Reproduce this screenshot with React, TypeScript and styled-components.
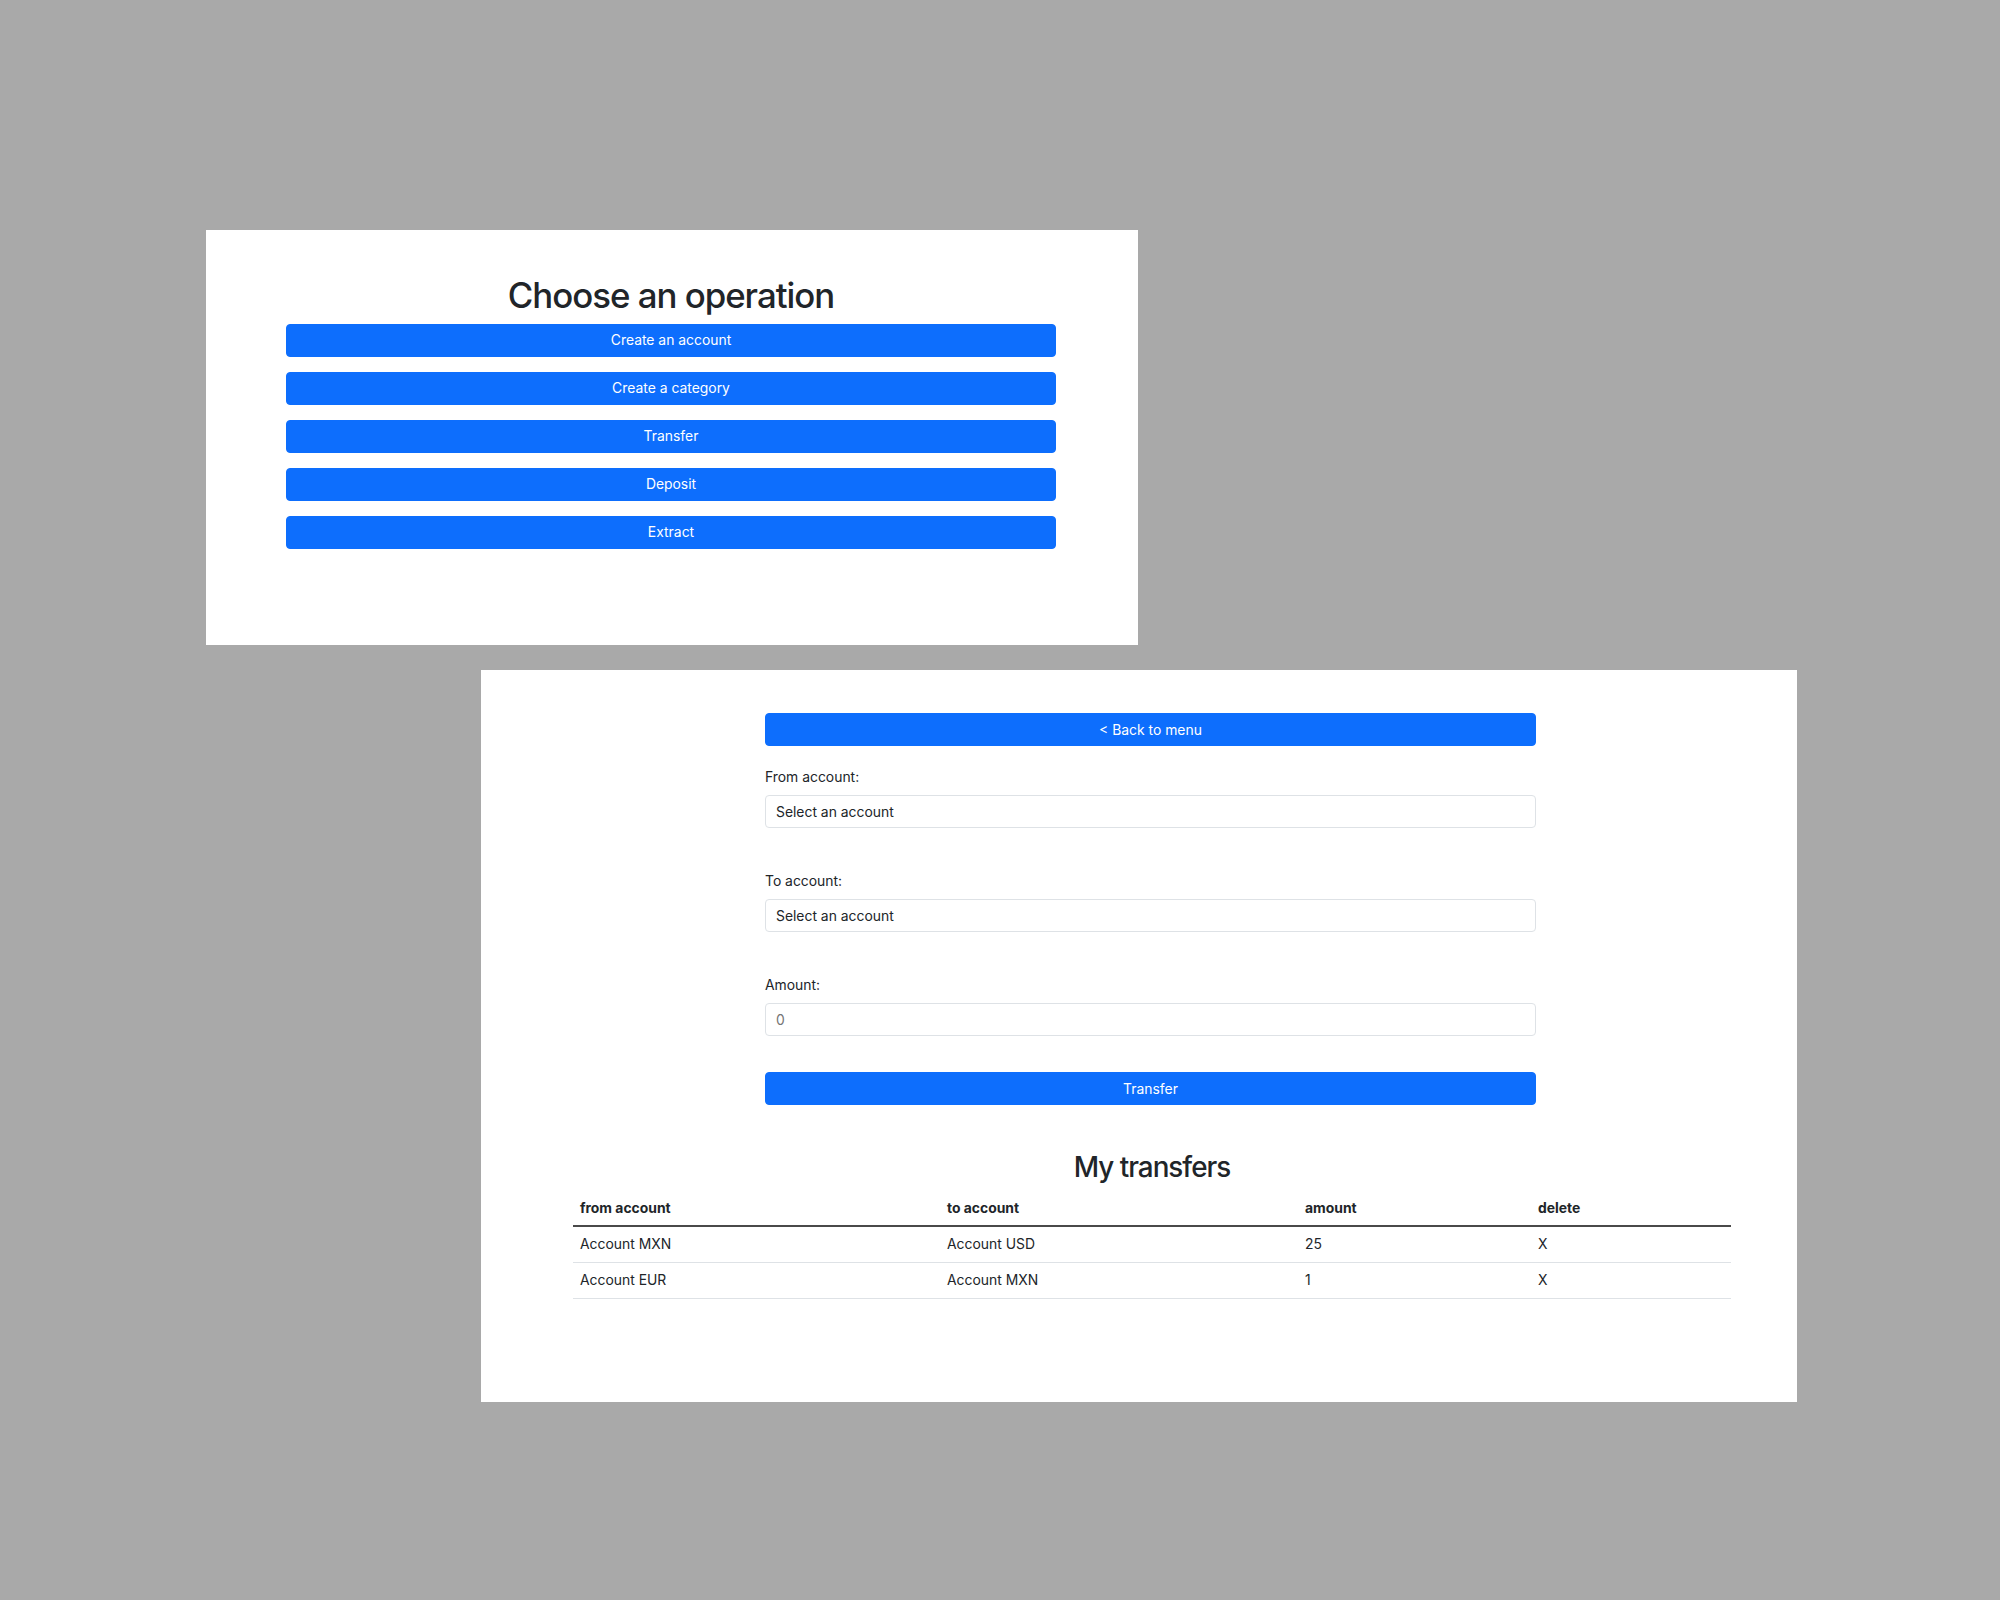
import styled, { createGlobalStyle } from 'styled-components';

const GlobalStyle = createGlobalStyle`
	html, body {
		margin: 0;
		padding: 0;
		background: #a9a9a9;
	}
	body {
		font-family: Inter, "Noto Sans", "Liberation Sans", sans-serif;
		color: #212529;
	}
	* {
		box-sizing: border-box;
	}
`;

const Desktop = styled.div`
	width: 2000px;
	height: 1600px;
	padding-top: 230px;
	display: flex;
	flex-direction: column;
	align-items: flex-start;
	gap: 25px;
`;

const Window = styled.section<{ $left: number; $width: number; $height: number }>`
	margin-left: ${({ $left }) => $left}px;
	width: ${({ $width }) => $width}px;
	height: ${({ $height }) => $height}px;
	background: #fff;
`;

const MenuBody = styled.div`
	display: flex;
	flex-direction: column;
	align-items: center;
	padding: 45px 82px 0 80px;
`;

const Heading = styled.h1`
	margin: 0 0 7px;
	font-size: 34.8px;
	font-weight: 500;
	line-height: 1.2;
	letter-spacing: -1px;
`;

const ButtonStack = styled.div`
	display: flex;
	flex-direction: column;
	gap: 15px;
	width: 100%;
`;

const Button = styled.button`
	display: block;
	width: 100%;
	height: 33px;
	padding: 0 10px;
	border: 1px solid #0d6efd;
	border-radius: 4px;
	background: #0d6efd;
	color: #fff;
	font-family: inherit;
	font-size: 13.9px;
	line-height: 20px;
	text-align: center;
	cursor: pointer;
`;

const TransferBody = styled.div`
	width: 1158px;
	margin-left: 92px;
	padding-top: 43px;
`;

const Form = styled.form`
	width: 771px;
	margin-left: 192px;
	display: flex;
	flex-direction: column;
`;

const Field = styled.div`
	margin-top: 21px;
	margin-bottom: 22px;

	& + & {
		margin-top: 21px;
	}
`;

const Label = styled.label`
	display: block;
	margin-bottom: 7px;
	font-size: 13.9px;
	line-height: 21px;
`;

const Select = styled.select`
	display: block;
	width: 100%;
	height: 33px;
	padding: 0 10px;
	border: 1px solid #dee2e6;
	border-radius: 4px;
	background: #fff;
	color: #212529;
	font-family: inherit;
	font-size: 13.9px;
	appearance: none;
	-webkit-appearance: none;
`;

const Input = styled.input`
	display: block;
	width: 100%;
	height: 33px;
	padding: 0 10px;
	border: 1px solid #dee2e6;
	border-radius: 4px;
	background: #fff;
	color: #212529;
	font-family: inherit;
	font-size: 13.9px;

	::placeholder {
		color: #80868c;
	}
`;

const SubmitRow = styled.div`
	margin-top: 14px;
`;

const SubHeading = styled.h2`
	margin: 46px 0 6px;
	text-align: center;
	font-size: 27.8px;
	font-weight: 500;
	line-height: 1.2;
	letter-spacing: -1px;
`;

const Table = styled.table`
	width: 100%;
	border-collapse: collapse;
	table-layout: fixed;
	font-size: 13.9px;
	line-height: 20px;

	th,
	td {
		padding: 7px 7px 8px;
		text-align: left;
		border-bottom: 1px solid #dee2e6;
	}

	th {
		padding: 8px 7px 7px;
		font-weight: 700;
		border-bottom: 2px solid #4a4a4a;
	}
`;

const transfers = [
	{ from: 'Account MXN', to: 'Account USD', amount: 25 },
	{ from: 'Account EUR', to: 'Account MXN', amount: 1 },
];

const operations = ['Create an account', 'Create a category', 'Transfer', 'Deposit', 'Extract'];

export default function App() {
	return (
		<>
			<GlobalStyle />
			<Desktop>
				<Window $left={206} $width={932} $height={415}>
					<MenuBody>
						<Heading>Choose an operation</Heading>
						<ButtonStack>
							{operations.map((op) => (
								<Button key={op} type="button">
									{op}
								</Button>
							))}
						</ButtonStack>
					</MenuBody>
				</Window>

				<Window $left={481} $width={1316} $height={732}>
					<TransferBody>
						<Form onSubmit={(e) => e.preventDefault()}>
							<Button type="button">&lt; Back to menu</Button>
							<Field>
								<Label htmlFor="from">From account:</Label>
								<Select id="from" defaultValue="">
									<option value="">Select an account</option>
								</Select>
							</Field>
							<Field>
								<Label htmlFor="to">To account:</Label>
								<Select id="to" defaultValue="">
									<option value="">Select an account</option>
								</Select>
							</Field>
							<Field>
								<Label htmlFor="amount">Amount:</Label>
								<Input id="amount" type="text" placeholder="0" />
							</Field>
							<SubmitRow>
								<Button type="submit">Transfer</Button>
							</SubmitRow>
						</Form>

						<SubHeading>My transfers</SubHeading>
						<Table>
							<colgroup>
								<col style={{ width: 367 }} />
								<col style={{ width: 358 }} />
								<col style={{ width: 233 }} />
								<col />
							</colgroup>
							<thead>
								<tr>
									<th>from account</th>
									<th>to account</th>
									<th>amount</th>
									<th>delete</th>
								</tr>
							</thead>
							<tbody>
								{transfers.map((t, i) => (
									<tr key={i}>
										<td>{t.from}</td>
										<td>{t.to}</td>
										<td>{t.amount}</td>
										<td>X</td>
									</tr>
								))}
							</tbody>
						</Table>
					</TransferBody>
				</Window>
			</Desktop>
		</>
	);
}
